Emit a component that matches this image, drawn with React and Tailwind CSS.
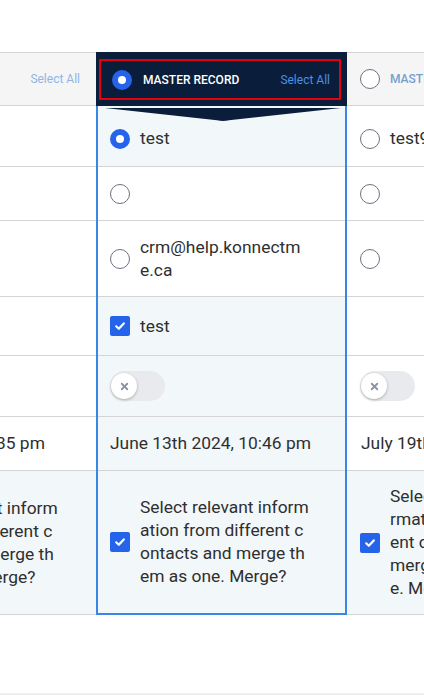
import { X } from "lucide-react";

const mergeText =
  "Select relevant information from different contacts and merge them as one. Merge?";

function Radio({ checked }) {
  if (checked) {
    return (
      <span className="flex h-5 w-5 shrink-0 items-center justify-center rounded-full bg-[#2563eb]">
        <span className="h-2 w-2 rounded-full bg-white" />
      </span>
    );
  }
  return <span className="h-5 w-5 shrink-0 rounded-full border-[1.5px] border-[#6b7280] bg-white" />;
}

function Checkbox() {
  return (
    <span className="flex h-5 w-5 shrink-0 items-center justify-center rounded-[2px] bg-[#2563eb]">
      <svg width="12" height="12" viewBox="0 0 12 12" fill="none">
        <path d="M2.2 6.3 4.8 8.8 9.8 3.4" stroke="white" strokeWidth="2.2" strokeLinecap="round" strokeLinejoin="round" />
      </svg>
    </span>
  );
}

function Toggle() {
  return (
    <span className="flex h-[30px] w-[55px] shrink-0 items-center rounded-full bg-[#e9eaee] px-[1px]">
      <span className="flex h-[26px] w-[26px] items-center justify-center rounded-full bg-white shadow-[0_1px_3px_rgba(0,0,0,0.28)]">
        <X size={11} strokeWidth={4} className="text-[#8a93a6]" />
      </span>
    </span>
  );
}

// plain column, the ones off to the side of the master
function SideColumn({ name, row1, date, textWidth, mergePad }) {
  return (
    <div className="flex w-[251px] shrink-0 flex-col">
      <div className="flex h-[54px] items-center border-y border-[#d4d4d4] bg-[#f5f5f5] pl-[13px] pr-4">
        <Radio />
        <span className="ml-[10px] text-[12px] font-medium text-[#76a0cc]">{name}</span>
        <span className="ml-auto text-[12px] text-[#8fb5e4]">Select All</span>
      </div>
      <div className="flex h-[61px] items-center gap-[10px] border-b border-[#d4d4d4] pl-[13px] pt-[5px]">
        <Radio />
        <span>{row1}</span>
      </div>
      <div className="flex h-[54px] items-center border-b border-[#d4d4d4] pl-[13px]">
        <Radio />
      </div>
      <div className="flex h-[76px] items-center border-b border-[#d4d4d4] pl-[13px]">
        <Radio />
      </div>
      <div className="h-[59px] border-b border-[#d4d4d4]" />
      <div className="flex h-[61px] items-center border-b border-[#d4d4d4] pl-[13px]">
        <Toggle />
      </div>
      <div className="flex h-[54px] items-center border-b border-[#d4d4d4] pl-[14px]">{date}</div>
      <div className={`flex h-[144px] items-center gap-[10px] border-b border-[#d4d4d4] bg-[#f2f7fa] ${mergePad}`}>
        <Checkbox />
        <p className={`break-all leading-[23px] ${textWidth}`}>{mergeText}</p>
      </div>
    </div>
  );
}

function MasterColumn() {
  return (
    <div className="flex w-[251px] shrink-0 flex-col">
      <div className="flex h-[54px] bg-[#0a1e3c] pb-[6px] pl-[3px] pr-[6px] pt-[7px]">
        <div className="flex flex-1 items-center border-2 border-[#e3000f] pl-[11px] pr-[9px]">
          <Radio checked />
          <span className="ml-[11px] text-[12px] font-medium text-white">MASTER RECORD</span>
          <span className="ml-auto text-[12px] text-[#4d8fe0]">Select All</span>
        </div>
      </div>
      <div className="relative flex flex-col border-x-2 border-b-2 border-[#3a86e5]">
        <svg className="absolute left-[7px] top-[2px]" width="236" height="14" viewBox="0 0 236 14">
          <path d="M0 0H236L124 12.2Q118 13.6 112 12.2Z" fill="#0a1e3c" />
        </svg>
        <div className="flex h-[61px] items-center gap-[10px] border-b border-[#d4d4d4] bg-[#f2f7fa] pl-3 pt-[5px]">
          <Radio checked />
          <span>test</span>
        </div>
        <div className="flex h-[54px] items-center border-b border-[#d4d4d4] bg-white pl-3">
          <Radio />
        </div>
        <div className="flex h-[76px] items-center gap-[10px] border-b border-[#d4d4d4] bg-white pl-3">
          <Radio />
          <span className="w-[165px] break-all leading-[23px]">crm@help.konnectme.ca</span>
        </div>
        <div className="flex h-[59px] items-center gap-[10px] border-b border-[#d4d4d4] bg-[#f2f7fa] pl-3">
          <Checkbox />
          <span>test</span>
        </div>
        <div className="flex h-[61px] items-center border-b border-[#d4d4d4] bg-[#f2f7fa] pl-3">
          <Toggle />
        </div>
        <div className="flex h-[54px] items-center border-b border-[#d4d4d4] bg-[#f2f7fa] pl-3">
          June 13th 2024, 10:46 pm
        </div>
        <div className="flex h-[142px] items-center gap-[10px] bg-[#f2f7fa] pl-3">
          <Checkbox />
          <p className="w-[171px] break-all leading-[23px]">{mergeText}</p>
        </div>
      </div>
    </div>
  );
}

export default function App() {
  return (
    <div className="flex h-[695px] w-[424px] flex-col overflow-hidden bg-white font-['Roboto',sans-serif] text-[17.4px] text-[#2f2f2f]">
      <div className="pt-[52px]">
        <div className="ml-[-155px] flex">
          <SideColumn
            name="MASTER RECORD"
            row1="test"
            date="May 13th 2024, 1:35 pm"
            textWidth="w-[171px]"
            mergePad="pl-[14px]"
          />
          <MasterColumn />
          <SideColumn
            name="MASTER RECORD"
            row1="test99"
            date="July 19th 2024, 10:12 am"
            textWidth="w-[148px]"
            mergePad="pl-[13px]"
          />
        </div>
      </div>
      <div className="flex-1" />
      <div className="h-[2px] bg-[#eeeeee]" />
    </div>
  );
}
